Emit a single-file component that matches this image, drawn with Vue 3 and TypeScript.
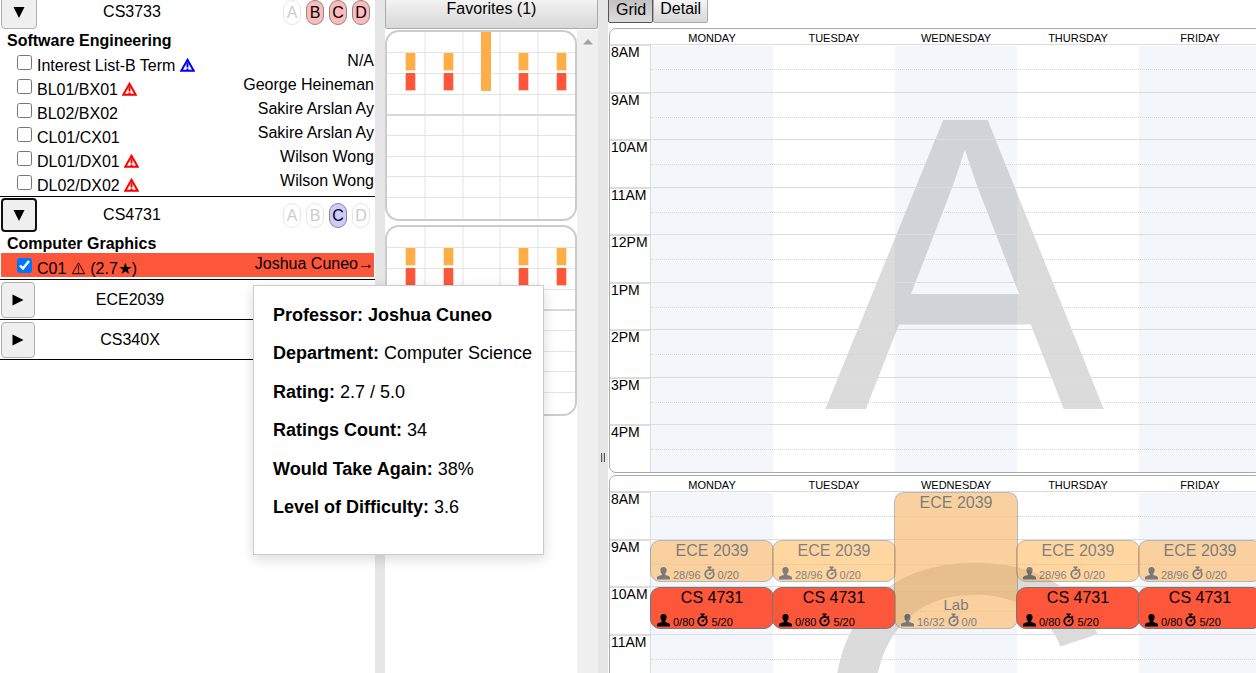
<script setup lang="ts">
import { ref } from 'vue'

interface Section {
  id: string
  prof: string
  warn?: 'blue' | 'red' | 'black'
  rating?: string
  selected?: boolean
}
interface Course {
  code: string
  title: string
  open: boolean
  focused?: boolean
  terms: { name: string; state: 'off' | 'pink' | 'lilac' }[]
  sections: Section[]
}
interface CalEvent {
  title: string
  start: number
  minutes: number
  seats: string
  wait: string
  kind?: string
  preview?: boolean
}

const terms = (states: ('off' | 'pink' | 'lilac')[]) =>
  ['A', 'B', 'C', 'D'].map((name, i) => ({ name, state: states[i] }))

const courses = ref<Course[]>([
  {
    code: 'CS3733',
    title: 'Software Engineering',
    open: true,
    terms: terms(['off', 'pink', 'pink', 'pink']),
    sections: [
      { id: 'Interest List-B Term', prof: 'N/A', warn: 'blue' },
      { id: 'BL01/BX01', prof: 'George Heineman', warn: 'red' },
      { id: 'BL02/BX02', prof: 'Sakire Arslan Ay' },
      { id: 'CL01/CX01', prof: 'Sakire Arslan Ay' },
      { id: 'DL01/DX01', prof: 'Wilson Wong', warn: 'red' },
      { id: 'DL02/DX02', prof: 'Wilson Wong', warn: 'red' },
    ],
  },
  {
    code: 'CS4731',
    title: 'Computer Graphics',
    open: true,
    focused: true,
    terms: terms(['off', 'off', 'lilac', 'off']),
    sections: [{ id: 'C01', prof: 'Joshua Cuneo→', warn: 'black', rating: '(2.7★)', selected: true }],
  },
  { code: 'ECE2039', title: '', open: false, terms: [], sections: [] },
  { code: 'CS340X', title: '', open: false, terms: [], sections: [] },
])

const details = [
  ['Department:', 'Computer Science'],
  ['Rating:', '2.7 / 5.0'],
  ['Ratings Count:', '34'],
  ['Would Take Again:', '38%'],
  ['Level of Difficulty:', '3.6'],
]

const days = ['Monday', 'Tuesday', 'Wednesday', 'Thursday', 'Friday']
const hours = ['8AM', '9AM', '10AM', '11AM', '12PM', '1PM', '2PM', '3PM', '4PM']

const lecture: CalEvent = { title: 'ECE 2039', start: 1, minutes: 50, seats: '28/96', wait: '0/20', preview: true }
const lab: CalEvent = { title: 'ECE 2039', start: 0, minutes: 170, seats: '16/32', wait: '0/0', kind: 'Lab', preview: true }
const graphics: CalEvent = { title: 'CS 4731', start: 2, minutes: 50, seats: '0/80', wait: '5/20' }

const calendars: { term: string; events: CalEvent[][] }[] = [
  { term: 'A', events: [[], [], [], [], []] },
  { term: 'C', events: [[lecture, graphics], [lecture, graphics], [lab], [lecture, graphics], [lecture, graphics]] },
]

const hourHeight = 47.5
const place = (e: CalEvent) => ({
  top: `${Math.ceil(hourHeight * e.start) + 1}px`,
  height: `${Math.round((hourHeight * e.minutes) / 60) + 2}px`,
})

const thumbs = [{ lab: true }, { lab: false }]
const thumbRows = [21, 42, 63, 83, 104, 125, 145, 166]
const thumbCols = [37, 75, 112, 150]
const thumbDays = [18, 56, 131, 169]
const view = ref('Grid')
</script>

<template>
  <main class="app">
    <section class="courses">
      <article v-for="c in courses" :key="c.code" class="course" :class="{ closed: !c.open }">
        <header class="course-head">
          <button class="toggle" :class="{ focused: c.focused }" :aria-label="'Toggle ' + c.code" @click="c.open = !c.open">
            <svg width="12" height="12" viewBox="0 0 12 12">
              <path :d="c.open ? 'M0.5 1H11.5L6 12Z' : 'M0.5 0.5V11.5L11.5 6Z'" />
            </svg>
          </button>
          <span class="code">{{ c.code }}</span>
          <span v-if="c.terms.length" class="terms">
            <span v-for="t in c.terms" :key="t.name" class="term" :class="t.state">{{ t.name }}</span>
          </span>
        </header>
        <template v-if="c.open">
          <h2 class="title">{{ c.title }}</h2>
          <div v-for="s in c.sections" :key="s.id" class="section" :class="{ selected: s.selected }">
            <input :id="c.code + s.id" v-model="s.selected" type="checkbox" />
            <label :for="c.code + s.id">
              {{ s.id }}
              <svg v-if="s.warn" class="warn" :class="s.warn" width="15" height="14" viewBox="0 0 15 14">
                <path d="M7.5 1.8L13.7 12.700H1.300Z" />
                <path d="M7.5 4.500V9.600M7.500 10.400V12.400" />
              </svg>
              {{ s.rating }}
            </label>
            <span class="prof">{{ s.prof }}</span>
          </div>
        </template>
      </article>
    </section>

    <div class="splitter"></div>

    <section class="favorites">
      <button class="fav-head">Favorites (1)</button>
      <div class="fav-body">
        <div class="fav-list">
          <div v-for="(t, i) in thumbs" :key="i" class="thumb">
            <svg viewBox="0 0 188 187" preserveAspectRatio="none">
              <rect v-for="x in thumbCols" :key="'c' + x" :x="x" y="0" width="2" height="187" fill="#f1f1f1" />
              <rect v-for="y in thumbRows" :key="'r' + y" x="0" :y="y - 1" width="188" :height="y === 83 ? 2 : 1" :fill="y === 83 ? '#d9d9d9' : '#e4e4e4'" />
              <template v-for="x in thumbDays" :key="'d' + x">
                <rect :x="x" y="20" width="11" height="19" fill="#ffe4c2" />
                <rect :x="x + 1" y="21" width="9" height="17" fill="#ffad47" />
                <rect :x="x" y="41" width="11" height="18" fill="#ffc9bf" />
                <rect :x="x + 1" y="41" width="9" height="17" fill="#fc573b" />
              </template>
              <rect v-if="t.lab" x="94" y="0" width="10" height="59" fill="#ffad47" />
            </svg>
          </div>
        </div>
        <div class="scrollbar">
          <svg width="10" height="6" viewBox="0 0 10 6"><path d="M0 5.5L5 0L10 5.5Z" fill="#a3a3a3" /></svg>
        </div>
      </div>
    </section>

    <div class="splitter grip"><span></span></div>

    <section class="schedule">
      <nav class="tabs">
        <button v-for="v in ['Grid', 'Detail']" :key="v" class="tab" :class="{ active: view === v }" @click="view = v">{{ v }}</button>
      </nav>
      <div v-for="cal in calendars" :key="cal.term" class="calendar">
        <div class="day-names">
          <span></span>
          <span v-for="d in days" :key="d">{{ d }}</span>
        </div>
        <div class="cal-body">
          <div class="stripes">
            <span></span>
            <i v-for="d in days" :key="d"></i>
          </div>
          <div class="watermark" aria-hidden="true">{{ cal.term }}</div>
          <div class="hours">
            <div v-for="h in hours" :key="h" class="hour">
              <span class="hour-name">{{ h }}</span>
              <span class="slot"></span>
            </div>
          </div>
          <div class="events">
            <span></span>
            <div v-for="(list, i) in cal.events" :key="i" class="day">
              <div v-for="e in list" :key="e.title" class="event" :class="{ preview: e.preview }" :style="place(e)">
                <span class="event-title">{{ e.title }}</span>
                <span v-if="e.kind" class="kind">{{ e.kind }}</span>
                <span class="stats">
                  <svg width="13" height="13" viewBox="0 0 13 13">
                    <path d="M6.5 0C8.800 0 9.700 1.500 9.600 3.300C9.500 5 8.800 6.200 8.200 6.900V8C10.200 8.600 13 9 13 10.800V12.500H0V10.800C0 9 2.800 8.600 4.800 8V6.900C4.200 6.200 3.500 5 3.400 3.300C3.300 1.500 4.200 0 6.500 0Z" />
                  </svg>
                  <span>{{ e.seats }}</span>
                  <svg width="11" height="14" viewBox="0 0 11 14">
                    <circle cx="5.500" cy="8.200" r="4.300" fill="none" stroke="#000" stroke-width="1.700" />
                    <path d="M3.500 0.500H7.500V2.100H6.500V4H4.500V2.100H3.500ZM9 2.500L10.500 4L9.600 4.900L8.100 3.400Z" />
                    <path d="M8 5.700L6.400 9.100L4.600 9L4.800 7.500Z" />
                  </svg>
                  <span>{{ e.wait }}</span>
                </span>
              </div>
            </div>
          </div>
        </div>
      </div>
    </section>

    <aside class="popup">
      <p><b>Professor: Joshua Cuneo</b></p>
      <p v-for="d in details" :key="d[0]"><b>{{ d[0] }}</b> {{ d[1] }}</p>
    </aside>
  </main>
</template>

<style>
body {
  margin: 0;
  background: #fff;
}
</style>

<style scoped>
.app {
  position: relative;
  display: flex;
  height: 100vh;
  overflow: hidden;
  font-family: 'Liberation Sans', Arial, sans-serif;
  font-size: 16px;
  line-height: 20px;
  color: #000;
}
button {
  font: inherit;
  color: inherit;
  padding: 0;
}
.courses {
  flex: 0 0 375px;
  margin-top: -6px;
}
.course {
  border-bottom: 1px solid #000;
  padding-bottom: 2px;
}
.course-head {
  display: flex;
  align-items: center;
  height: 36px;
  padding-left: 1px;
}
.closed {
  padding-bottom: 0;
}
.closed .course-head {
  height: 39px;
}
.toggle {
  box-sizing: border-box;
  display: flex;
  align-items: center;
  justify-content: center;
  width: 36px;
  height: 34px;
  background: #efefef;
  border: 1px solid #b0b0b0;
  border-radius: 4px;
}
.closed .toggle {
  width: 34px;
  height: 36px;
}
.toggle.focused {
  border: 2px solid #101010;
}
.code {
  width: 190px;
  line-height: 22px;
  text-align: center;
}
.terms {
  display: flex;
  gap: 5px;
  margin-left: auto;
  padding-right: 5px;
}
.term {
  box-sizing: border-box;
  width: 18px;
  height: 25px;
  line-height: 24px;
  text-align: center;
  border: 1px solid #888;
  border-radius: 9px;
}
.term.off {
  color: #ccc;
  border-color: #e6e6e6;
}
.term.pink {
  background: #ffbaba;
}
.term.lilac {
  background: #ccccff;
}
.title {
  height: 20px;
  margin: 0;
  padding-left: 7px;
  font-size: 16px;
  line-height: 22px;
  font-weight: bold;
}
.section {
  display: flex;
  align-items: flex-start;
  height: 24px;
  margin: 0 1px;
}
.section.selected {
  background: #fc573b;
}
.section input {
  width: 15px;
  height: 15px;
  margin: 5px 5px 0 16px;
}
.section label {
  margin-top: 4px;
  line-height: 24px;
  white-space: nowrap;
}
.prof {
  margin-left: auto;
  line-height: 22px;
}
.warn {
  fill: none;
  stroke-width: 2;
  vertical-align: -1px;
}
.warn.blue {
  stroke: #00f;
}
.warn.red {
  stroke: #f00;
}
.warn.black {
  stroke: #200;
  stroke-width: 1;
}
.splitter {
  flex: 0 0 10px;
  background: #e6e6e6;
}
.grip {
  display: flex;
  justify-content: center;
}
.grip span {
  box-sizing: border-box;
  width: 4px;
  height: 9px;
  margin-top: 453px;
  border: solid #555;
  border-width: 0 1px;
  background: #ccc;
}
.favorites {
  flex: 0 0 213px;
  display: flex;
  flex-direction: column;
}
.fav-head {
  height: 39px;
  margin-top: -10px;
  padding-bottom: 2px;
  border: 1px solid #aaa;
  border-radius: 2px;
  background: linear-gradient(#fff, #ececec 40%, #d8d8d8);
}
.fav-body {
  flex: 1;
  display: flex;
}
.fav-list {
  flex: 1;
  padding-top: 1px;
}
.thumb {
  border: 2px solid #ccc;
  border-radius: 14px;
  overflow: hidden;
  margin-bottom: 4px;
}
.thumb svg {
  display: block;
  width: 100%;
  height: 187px;
}
.scrollbar {
  width: 21px;
  margin-top: 1px;
  padding-top: 7px;
  box-sizing: border-box;
  text-align: center;
  line-height: 6px;
  background: #f0f0f0;
}
.schedule {
  flex: 1;
  min-width: 0;
}
.tabs {
  display: flex;
  height: 28px;
}
.tab {
  height: 29px;
  margin-top: -6px;
  padding: 0 6px;
  border: 1px solid #aaa;
  border-radius: 2px;
  background: linear-gradient(#fff, #ececec 40%, #d8d8d8);
}
.tab.active {
  padding: 3px 6px 0 7px;
  border-color: #555;
  background: linear-gradient(#bbb, #ddd);
}
.calendar {
  margin: 0 -6px 2px 1px;
  border: 1px solid #aaa;
  border-radius: 7px;
  overflow: hidden;
}
.day-names,
.stripes,
.events {
  display: grid;
  grid-template-columns: 41px repeat(5, 1fr);
}
.day-names {
  height: 15px;
  line-height: 18px;
  font-size: 11px;
  text-align: center;
  text-transform: uppercase;
}
.cal-body {
  position: relative;
  overflow: hidden;
}
.stripes,
.events,
.watermark {
  position: absolute;
  inset: 0;
}
.stripes {
  top: 2px;
}
.stripes i:nth-of-type(odd) {
  background: #f3f6fb;
}
.watermark {
  padding-left: 58px;
  text-align: center;
  font-size: 420px;
  line-height: 440px;
  color: rgba(0, 0, 0, 0.14);
}
.hours {
  position: relative;
}
.hour {
  display: flex;
  box-sizing: border-box;
  height: 48px;
  border-top: 1px solid #dcdcdc;
}
.hour:nth-child(even) {
  height: 47px;
}
.hour-name {
  box-sizing: border-box;
  width: 41px;
  padding-left: 1px;
  font-size: 14px;
  line-height: 12px;
  border-top: 1px solid #dcdcdc;
  border-right: 1px solid #dcdcdc;
}
.slot {
  flex: 1;
  height: 24px;
  border-bottom: 1px dotted #d4d4d4;
}
.day {
  position: relative;
}
.event {
  position: absolute;
  left: -1px;
  right: -1px;
  box-sizing: border-box;
  display: flex;
  flex-direction: column;
  border: 1px solid #777;
  border-radius: 10px;
  text-align: center;
  background: #fc573b;
}
.event.preview {
  background: #ffac44;
  opacity: 0.5;
}
.kind {
  margin-top: auto;
  font-size: 15px;
  line-height: 16px;
}
.stats {
  display: flex;
  align-items: flex-end;
  gap: 3px;
  height: 14px;
  padding: 0 0 1px 6px;
  margin-top: auto;
  font-size: 11px;
  line-height: 10px;
}
.kind + .stats {
  margin-top: 0;
}
.popup {
  position: absolute;
  left: 253px;
  top: 285px;
  box-sizing: border-box;
  width: 291px;
  height: 270px;
  padding: 19px 10px 37px 19px;
  display: flex;
  flex-direction: column;
  justify-content: space-between;
  background: #fff;
  border: 1px solid #ccc;
  box-shadow: 0 4px 12px rgba(0, 0, 0, 0.15);
  font-size: 18px;
  white-space: nowrap;
}
.popup p {
  margin: 0;
}
</style>
